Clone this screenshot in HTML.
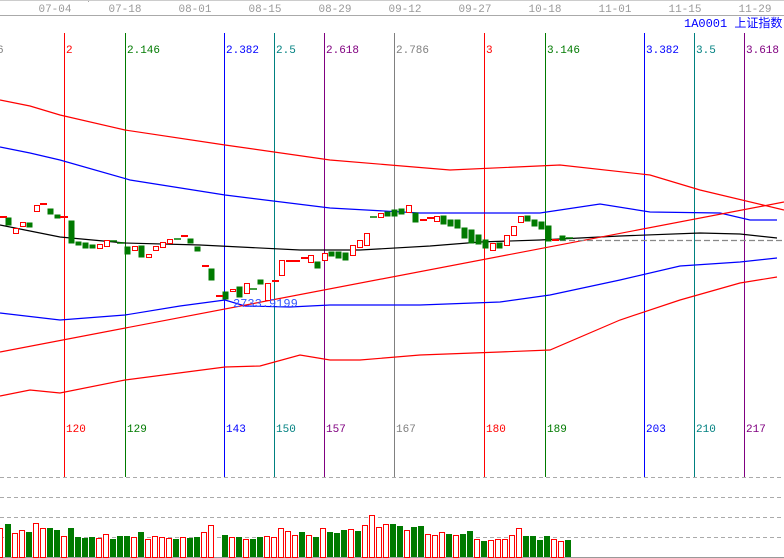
<!DOCTYPE html><html><head><meta charset="utf-8"><style>
html,body{margin:0;padding:0;background:#fff;width:784px;height:558px;overflow:hidden}
svg{display:block}
text{font-family:"Liberation Mono","DejaVu Sans Mono",monospace;font-size:11px}
</style></head><body>
<svg width="784" height="558" viewBox="0 0 784 558" xmlns="http://www.w3.org/2000/svg">
<rect width="784" height="558" fill="#fff"/>
<line x1="0" y1="15.5" x2="784" y2="15.5" stroke="#aaa"/>
<line x1="88.5" y1="0" x2="88.5" y2="2" stroke="#aaa"/>
<line x1="0" y1="0.5" x2="784" y2="0.5" stroke="#ccc"/>
<g fill="#999" font-size="10" text-anchor="middle" style="font-family:'Liberation Sans',sans-serif;font-size:10px">
<text x="55" y="12">07-04</text><text x="125" y="12">07-18</text><text x="195" y="12">08-01</text><text x="265" y="12">08-15</text><text x="335" y="12">08-29</text><text x="405" y="12">09-12</text><text x="475" y="12">09-27</text><text x="545" y="12">10-18</text><text x="615" y="12">11-01</text><text x="685" y="12">11-15</text><text x="755" y="12">11-29</text>
</g>
<text x="684" y="27" fill="#00f" style="font-family:'Liberation Mono','WenQuanYi Zen Hei',monospace;font-size:12px">1A0001 <tspan style="font-family:'WenQuanYi Zen Hei','Noto Sans CJK SC',sans-serif">上证指数</tspan></text>
<!-- fib lines -->
<g stroke-width="1">
<line x1="64.5" y1="33" x2="64.5" y2="477" stroke="#f00"/>
<line x1="125.5" y1="33" x2="125.5" y2="477" stroke="#007a00"/>
<line x1="224.5" y1="33" x2="224.5" y2="477" stroke="#00f"/>
<line x1="274.5" y1="33" x2="274.5" y2="477" stroke="#008080"/>
<line x1="324.5" y1="33" x2="324.5" y2="477" stroke="#800080"/>
<line x1="394.5" y1="33" x2="394.5" y2="477" stroke="#808080"/>
<line x1="484.5" y1="33" x2="484.5" y2="477" stroke="#f00"/>
<line x1="545.5" y1="33" x2="545.5" y2="477" stroke="#007a00"/>
<line x1="644.5" y1="33" x2="644.5" y2="477" stroke="#00f"/>
<line x1="694.5" y1="33" x2="694.5" y2="477" stroke="#008080"/>
<line x1="744.5" y1="33" x2="744.5" y2="477" stroke="#800080"/>
</g>
<g>
<text x="-3" y="53" fill="#808080">6</text>
<text x="66" y="53" fill="#f00">2</text><text x="127" y="53" fill="#007a00">2.146</text><text x="226" y="53" fill="#00f">2.382</text><text x="276" y="53" fill="#008080">2.5</text><text x="326" y="53" fill="#800080">2.618</text><text x="396" y="53" fill="#808080">2.786</text><text x="486" y="53" fill="#f00">3</text><text x="547" y="53" fill="#007a00">3.146</text><text x="646" y="53" fill="#00f">3.382</text><text x="696" y="53" fill="#008080">3.5</text><text x="746" y="53" fill="#800080">3.618</text>
<text x="66" y="432" fill="#f00">120</text><text x="127" y="432" fill="#007a00">129</text><text x="226" y="432" fill="#00f">143</text><text x="276" y="432" fill="#008080">150</text><text x="326" y="432" fill="#800080">157</text><text x="396" y="432" fill="#808080">167</text><text x="486" y="432" fill="#f00">180</text><text x="547" y="432" fill="#007a00">189</text><text x="646" y="432" fill="#00f">203</text><text x="696" y="432" fill="#008080">210</text><text x="746" y="432" fill="#800080">217</text>
</g>
<!-- bands -->
<g fill="none" stroke-width="1.2">
<polyline stroke="#f00" points="0,100 30,106 60,115 125,130 225,145 330,160 450,170 560,165 650,175 700,190 784,210"/>
<polyline stroke="#00f" points="0,147 30,153 60,160 130,180 225,195 330,208 420,213 540,213 600,204 650,212 720,213 750,220 777,220"/>
<polyline stroke="#000" points="0,225 30,231 60,237 125,243 200,245 300,250 360,250 430,246 480,242 540,240 620,236 700,233 740,234 777,238"/>
<polyline stroke="#00f" points="0,313 60,320 125,315 180,306 225,300 245,306 290,307 330,305 420,305 500,302 550,295 620,280 680,266 740,262 777,258"/>
<polyline stroke="#f00" points="0,396 30,390 60,393 125,380 225,367 260,366 300,355 330,360 360,360 420,355 500,352 550,350 620,320 680,300 740,283 777,277"/>
<line x1="0" y1="352" x2="784" y2="202" stroke="#f00"/>
<line x1="560" y1="240.5" x2="784" y2="240.5" stroke="#888" stroke-dasharray="6,3"/>
</g>
<!-- candles -->
<g stroke-width="1">
<g fill="#007a00" stroke="#007a00">
<rect x="6" y="218" width="5" height="7"/><rect x="27" y="223" width="5" height="4"/><rect x="48" y="209" width="5" height="5"/><rect x="55" y="215" width="5" height="3"/><rect x="69" y="221" width="5" height="22"/><rect x="76" y="242" width="5" height="3"/><rect x="83" y="243" width="5" height="5"/><rect x="90" y="245" width="5" height="3"/><rect x="125" y="247" width="5" height="7"/><rect x="139" y="246" width="5" height="11"/><rect x="188" y="239" width="5" height="4"/><rect x="195" y="247" width="5" height="4"/><rect x="209" y="269" width="5" height="11"/><rect x="223" y="292" width="5" height="7"/><rect x="237" y="287" width="5" height="10"/><rect x="258" y="280" width="5" height="4"/><rect x="315" y="262" width="5" height="6"/><rect x="329" y="252" width="5" height="4"/><rect x="336" y="252" width="5" height="6"/><rect x="343" y="253" width="5" height="7"/><rect x="385" y="212" width="5" height="4"/><rect x="392" y="210" width="5" height="6"/><rect x="399" y="209" width="5" height="5"/><rect x="413" y="213" width="5" height="9"/><rect x="441" y="216" width="5" height="8"/><rect x="448" y="220" width="5" height="6"/><rect x="455" y="220" width="5" height="8"/><rect x="462" y="228" width="5" height="10"/><rect x="469" y="230" width="5" height="13"/><rect x="476" y="235" width="5" height="9"/><rect x="483" y="240" width="5" height="8"/><rect x="497" y="243" width="5" height="5"/><rect x="525" y="216" width="5" height="5"/><rect x="532" y="220" width="5" height="6"/><rect x="539" y="222" width="5" height="7"/><rect x="546" y="226" width="5" height="15"/><rect x="560" y="236" width="5" height="4"/>
</g>
<g fill="#fff" stroke="#f00">
<rect x="13.5" y="228.5" width="5" height="5"/><rect x="20.5" y="222.5" width="5" height="4"/><rect x="34.5" y="205.5" width="5" height="6"/><rect x="97.5" y="244.5" width="5" height="4"/><rect x="104.5" y="240.5" width="5" height="6"/><rect x="132.5" y="246.5" width="5" height="4"/><rect x="146.5" y="254.5" width="5" height="3"/><rect x="153.5" y="246.5" width="5" height="4"/><rect x="160.5" y="242.5" width="5" height="5"/><rect x="167.5" y="239.5" width="5" height="4"/><rect x="230.5" y="289.5" width="5" height="2"/><rect x="244.5" y="283.5" width="5" height="10"/><rect x="265.5" y="283.5" width="5" height="17"/><rect x="279.5" y="260.5" width="5" height="15"/><rect x="308.5" y="255.5" width="5" height="7"/><rect x="322.5" y="253.5" width="5" height="7"/><rect x="350.5" y="245.5" width="5" height="10"/><rect x="357.5" y="240.5" width="5" height="7"/><rect x="364.5" y="233.5" width="5" height="12"/><rect x="378.5" y="213.5" width="5" height="4"/><rect x="406.5" y="205.5" width="5" height="7"/><rect x="434.5" y="216.5" width="5" height="5"/><rect x="490.5" y="243.5" width="5" height="7"/><rect x="504.5" y="235.5" width="5" height="10"/><rect x="511.5" y="226.5" width="5" height="9"/><rect x="518.5" y="216.5" width="5" height="6"/>
</g>
<g stroke="#f00" stroke-width="2">
<line x1="0" y1="217" x2="7" y2="217"/><line x1="40" y1="204" x2="47" y2="204"/><line x1="60" y1="217" x2="68" y2="217"/><line x1="181" y1="236" x2="188" y2="236"/><line x1="202" y1="266" x2="209" y2="266"/><line x1="216" y1="296" x2="223" y2="296"/><line x1="272" y1="281" x2="279" y2="281"/><line x1="286" y1="261" x2="293" y2="261"/><line x1="293" y1="261" x2="300" y2="261"/><line x1="301" y1="258" x2="308" y2="258"/><line x1="420" y1="220" x2="427" y2="220"/><line x1="427" y1="218" x2="434" y2="218"/><line x1="552" y1="240" x2="559" y2="240"/>
</g>
<g stroke="#007a00" stroke-width="1.5"><line x1="110" y1="241" x2="117" y2="241"/><line x1="117" y1="243" x2="124" y2="243"/><line x1="174" y1="239" x2="181" y2="239"/><line x1="250" y1="289" x2="257" y2="289"/><line x1="370" y1="217" x2="377" y2="217"/><line x1="566" y1="238" x2="573" y2="238"/></g>
</g>
<text x="233" y="307" fill="#3355ff" style="font-size:12px">2733.9199</text>
<!-- volume area -->
<g stroke="#aaa" stroke-dasharray="4,3"><line x1="0" y1="477.5" x2="784" y2="477.5"/><line x1="0" y1="497.5" x2="784" y2="497.5"/><line x1="0" y1="517.5" x2="784" y2="517.5"/><line x1="0" y1="537.5" x2="784" y2="537.5"/></g>
<line x1="0" y1="557.5" x2="784" y2="557.5" stroke="#999"/>
<g fill="#007a00">
<rect x="5" y="524" width="6" height="33"/><rect x="26" y="532" width="6" height="25"/><rect x="47" y="528" width="6" height="29"/><rect x="54" y="530" width="6" height="27"/><rect x="68" y="528" width="6" height="29"/><rect x="75" y="537" width="6" height="20"/><rect x="82" y="538" width="6" height="19"/><rect x="89" y="537" width="6" height="20"/><rect x="110" y="539" width="6" height="18"/><rect x="117" y="536" width="6" height="21"/><rect x="124" y="536" width="6" height="21"/><rect x="138" y="532" width="6" height="25"/><rect x="173" y="539" width="6" height="18"/><rect x="187" y="538" width="6" height="19"/><rect x="194" y="537" width="6" height="20"/><rect x="222" y="535" width="6" height="22"/><rect x="236" y="537" width="6" height="20"/><rect x="250" y="539" width="6" height="18"/><rect x="257" y="537" width="6" height="20"/><rect x="299" y="532" width="6" height="25"/><rect x="313" y="537" width="6" height="20"/><rect x="327" y="532" width="6" height="25"/><rect x="334" y="533" width="6" height="24"/><rect x="341" y="530" width="6" height="27"/><rect x="355" y="531" width="6" height="26"/><rect x="390" y="524" width="6" height="33"/><rect x="397" y="526" width="6" height="31"/><rect x="411" y="527" width="6" height="30"/><rect x="418" y="526" width="6" height="31"/><rect x="446" y="534" width="6" height="23"/><rect x="460" y="534" width="6" height="23"/><rect x="467" y="531" width="6" height="26"/><rect x="481" y="541" width="6" height="16"/><rect x="523" y="536" width="6" height="21"/><rect x="530" y="536" width="6" height="21"/><rect x="537" y="540" width="6" height="17"/><rect x="544" y="536" width="6" height="21"/><rect x="565" y="540" width="6" height="17"/>
</g>
<g fill="#fff" stroke="#f00">
<rect x="-2.5" y="528.5" width="5" height="29"/><rect x="12.5" y="533.5" width="5" height="24"/><rect x="19.5" y="530.5" width="5" height="27"/><rect x="33.5" y="523.5" width="5" height="34"/><rect x="40.5" y="528.5" width="5" height="29"/><rect x="61.5" y="536.5" width="5" height="21"/><rect x="96.5" y="538.5" width="5" height="19"/><rect x="103.5" y="534.5" width="5" height="23"/><rect x="131.5" y="537.5" width="5" height="20"/><rect x="145.5" y="539.5" width="5" height="18"/><rect x="152.5" y="536.5" width="5" height="21"/><rect x="159.5" y="537.5" width="5" height="20"/><rect x="166.5" y="538.5" width="5" height="19"/><rect x="180.5" y="537.5" width="5" height="20"/><rect x="201.5" y="532.5" width="5" height="25"/><rect x="208.5" y="525.5" width="5" height="32"/><rect x="229.5" y="537.5" width="5" height="20"/><rect x="243.5" y="539.5" width="5" height="18"/><rect x="264.5" y="536.5" width="5" height="21"/><rect x="271.5" y="537.5" width="5" height="20"/><rect x="278.5" y="528.5" width="5" height="29"/><rect x="285.5" y="531.5" width="5" height="26"/><rect x="292.5" y="535.5" width="5" height="22"/><rect x="306.5" y="535.5" width="5" height="22"/><rect x="320.5" y="528.5" width="5" height="29"/><rect x="348.5" y="529.5" width="5" height="28"/><rect x="362.5" y="525.5" width="5" height="32"/><rect x="369.5" y="515.5" width="5" height="42"/><rect x="376.5" y="527.5" width="5" height="30"/><rect x="383.5" y="524.5" width="5" height="33"/><rect x="404.5" y="530.5" width="5" height="27"/><rect x="425.5" y="534.5" width="5" height="23"/><rect x="432.5" y="535.5" width="5" height="22"/><rect x="439.5" y="532.5" width="5" height="25"/><rect x="453.5" y="535.5" width="5" height="22"/><rect x="474.5" y="539.5" width="5" height="18"/><rect x="488.5" y="540.5" width="5" height="17"/><rect x="495.5" y="539.5" width="5" height="18"/><rect x="502.5" y="539.5" width="5" height="18"/><rect x="509.5" y="535.5" width="5" height="22"/><rect x="516.5" y="528.5" width="5" height="29"/><rect x="551.5" y="539.5" width="5" height="18"/><rect x="558.5" y="541.5" width="5" height="16"/>
</g>
</svg>
</body></html>
